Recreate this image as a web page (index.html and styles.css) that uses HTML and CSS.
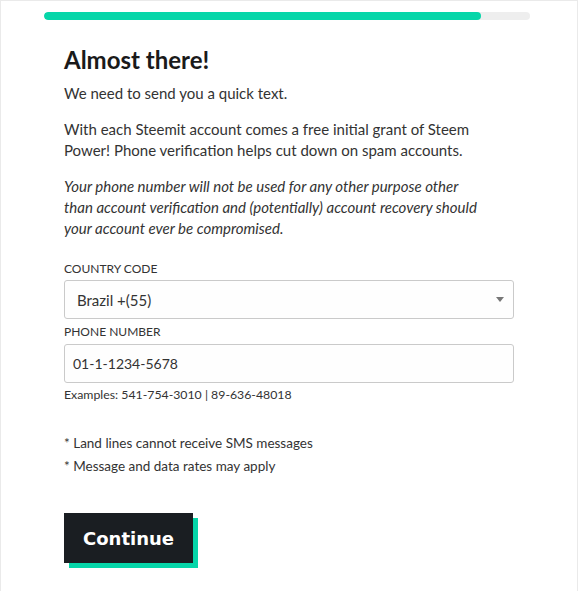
FILE: index.html
```html
<!DOCTYPE html>
<html>
<head>
<meta charset="utf-8">
<link rel="stylesheet" href="styles.css">
</head>
<body>
<div class="card">
  <div class="progress"><div class="progress-fill" style="width: 90%"></div></div>
  <div class="content">
    <h1 class="title">Almost there!</h1>
    <p class="text">We need to send you a quick text.</p>
    <p class="text">With each Steemit account comes a free initial grant of Steem Power! Phone verification helps cut down on spam accounts.</p>
    <p class="text italic">Your phone number will not be used for any other purpose other than account verification and (potentially) account recovery should your account ever be compromised.</p>
    <label class="label">COUNTRY CODE</label>
    <div class="select">
      <span>Brazil +(55)</span>
      <svg class="caret" width="8" height="5" viewBox="0 0 8 5"><path d="M0 0 H8 L4 5 Z" fill="#777"/></svg>
    </div>
    <label class="label label-2">PHONE NUMBER</label>
    <div class="input">01-1-1234-5678</div>
    <div class="hint">Examples: 541-754-3010 | 89-636-48018</div>
    <div class="notes">
      <div class="note">* Land lines cannot receive SMS messages</div>
      <div class="note">* Message and data rates may apply</div>
    </div>
    <div class="btn-wrap"><button class="btn">Continue</button></div>
  </div>
</div>
</body>
</html>
```
FILE: styles.css
```css
html, body {
  margin: 0;
  padding: 0;
  background: #fff;
}
body {
  font-family: "Lato", "Liberation Sans", sans-serif;
  color: #333;
  font-size: 15px;
}
.card {
  box-sizing: border-box;
  width: 578px;
  height: 600px;
  border: 1px solid #eaeaea;
  border-bottom: none;
  padding: 11px 47px 0 43px;
}
.progress {
  height: 8px;
  background: #eeeeee;
  border-radius: 4px;
  overflow: hidden;
}
.progress-fill {
  height: 100%;
  background: #06d6a9;
  border-radius: 4px;
}
.content {
  padding-left: 20px;
  padding-right: 16px;
}
.title {
  margin: 25px 0 0;
  font-size: 24px;
  font-weight: 700;
  color: #1a1a1a;
  line-height: 30px;
}
.text {
  margin: 8px 0 0;
  line-height: 21px;
  font-size: 15px;
}
.text + .text { margin-top: 15px; }
.italic {
  font-style: italic;
  max-width: 420px;
}
.label {
  display: block;
  margin-top: 22px;
  font-size: 12px;
  color: #333;
  line-height: 16px;
}
.select, .input {
  box-sizing: border-box;
  height: 39px;
  border: 1px solid #cacaca;
  border-radius: 3px;
  background: #fefefe;
  display: flex;
  align-items: center;
  color: #333;
}
.select {
  margin-top: 3px;
  font-size: 15px;
  padding: 0 9px 0 12px;
  justify-content: space-between;
}
.label-2 { margin-top: 5px; }
.input {
  margin-top: 4px;
  padding: 0 8px;
  font-size: 14px;
}
.hint {
  margin-top: 4px;
  font-size: 12.3px;
  line-height: 16px;
}
.notes { margin-top: 29px; }
.note {
  font-size: 13.5px;
  line-height: 23px;
}
.btn-wrap {
  margin-top: 35px;
  display: inline-block;
  box-shadow: 5px 5px 0 #06d6a9;
}
.btn {
  display: block;
  width: 129px;
  height: 50px;
  border: none;
  background: #1a1e22;
  color: #fff;
  font-family: "DejaVu Sans", sans-serif;
  font-weight: 700;
  font-size: 18px;
  padding: 0;
}
```
